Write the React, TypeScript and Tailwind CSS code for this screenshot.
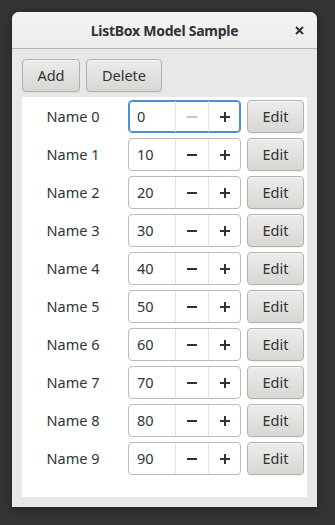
import React from "react";

const rows = Array.from({ length: 10 }, (_, i) => ({ name: `Name ${i}`, value: i * 10 }));

function Minus({ disabled }: { disabled?: boolean }) {
    return (
        <svg width="12" height="12" viewBox="0 0 12 12">
            <path d="M1 6h10" stroke={disabled ? "#c7c9c8" : "#2e3436"} strokeWidth="2" />
        </svg>
    );
}

function Plus() {
    return (
        <svg width="12" height="12" viewBox="0 0 12 12">
            <path d="M1 6h10M6 1v10" stroke="#2e3436" strokeWidth="2" />
        </svg>
    );
}

function Button({ label, className }: { label: string; className?: string }) {
    return (
        <button
            className={`h-[33px] rounded-[4px] border border-[#b1b1ae] bg-gradient-to-b from-[#edecea] to-[#d9d7d4] text-[14.5px] text-[#2e3436] shadow-[inset_0_1px_#ffffff80,0_1px_#0000000d] ${className ?? ""}`}
        >
            {label}
        </button>
    );
}

function SpinButton({ value, focused }: { value: number; focused?: boolean }) {
    return (
        <div
            className={`flex h-[33px] w-[113px] rounded-[4px] border bg-white ${
                focused ? "border-[#4a90d9] shadow-[inset_0_0_0_1px_#4a90d9]" : "border-[#bfbab5]"
            }`}
        >
            <div className="flex w-[46px] items-center pl-[8px] text-[14.5px] text-[#2e3436]">{value}</div>
            <div className="flex w-[33px] items-center justify-center border-l border-[#e2e2e0]">
                <Minus disabled={value === 0} />
            </div>
            <div className="flex flex-1 items-center justify-center border-l border-[#e2e2e0]">
                <Plus />
            </div>
        </div>
    );
}

export default function App() {
    return (
        <div
            className="h-[525px] w-[335px] bg-[#323436] pl-[12px] pt-[12px]"
            style={{ fontFamily: '"Noto Sans", "Open Sans", sans-serif' }}
        >
            <div className="flex h-[495px] w-[305px] flex-col rounded-t-[7px] bg-[#e8e8e7] shadow-[0_2px_8px_#00000066]">
                <header className="relative flex h-[37px] items-center justify-center rounded-t-[7px] border-b border-[#b6b6b3] bg-gradient-to-b from-[#f4f4f3] to-[#ececeb]">
                    <span className="text-[14px] font-bold tracking-[-0.25px] text-[#2e3436]">ListBox Model Sample</span>
                    <svg className="absolute right-[13px] top-[14px]" width="9" height="9" viewBox="0 0 9 9">
                        <path d="M1 1l7 7M8 1L1 8" stroke="#2e3436" strokeWidth="2" />
                    </svg>
                </header>
                <div className="flex flex-1 flex-col px-[10px] pb-[10px] pt-[10px]">
                    <div className="flex gap-[6px]">
                        <Button label="Add" className="w-[58px]" />
                        <Button label="Delete" className="w-[76px]" />
                    </div>
                    <div className="mt-[5px] flex-1 bg-white">
                        {rows.map((r, i) => (
                            <div key={r.name} className="flex h-[38px] items-start pt-[3px]">
                                <div className="flex h-[33px] w-[102px] items-center justify-center text-[14.5px] text-[#2e3436]">
                                    {r.name}
                                </div>
                                <div className="ml-[4px]">
                                    <SpinButton value={r.value} focused={i === 0} />
                                </div>
                                <Button label="Edit" className="ml-[6px] w-[57px]" />
                            </div>
                        ))}
                    </div>
                </div>
            </div>
        </div>
    );
}
